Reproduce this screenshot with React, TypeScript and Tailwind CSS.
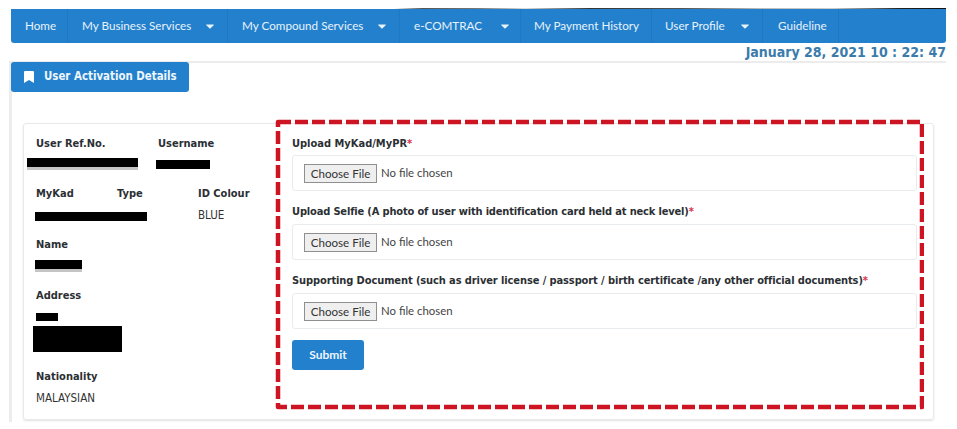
const navItems = [
  { label: 'Home', w: 'w-[57px]', pl: 'pl-[14px]', caret: '' },
  { label: 'My Business Services', w: 'w-[160px]', pl: 'pl-[14px]', caret: 'ml-[15px]' },
  { label: 'My Compound Services', w: 'w-[172px]', pl: 'pl-[14px]', caret: 'ml-[15px]' },
  { label: 'e-COMTRAC', w: 'w-[121px]', pl: 'pl-[14px]', caret: 'ml-[19px]' },
  { label: 'My Payment History', w: 'w-[131px]', pl: 'pl-[13px]', caret: '' },
  { label: 'User Profile', w: 'w-[111px]', pl: 'pl-[13px]', caret: 'ml-[16px]' },
  { label: 'Guideline', w: 'w-[76px]', pl: 'pl-[15px]', caret: '' },
]

const uploads = [
  { label: 'Upload MyKad/MyPR', mt: 'mt-0', gap: 'mt-[4px]', tracking: '' },
  { label: 'Upload Selfie (A photo of user with identification card held at neck level)', mt: 'mt-[14px]', gap: 'mt-[5px]', tracking: 'tracking-[-0.16px]' },
  { label: 'Supporting Document (such as driver license / passport / birth certificate /any other official documents)', mt: 'mt-[14px]', gap: 'mt-[5px]', tracking: 'tracking-[-0.1px]' },
]

function Caret() {
  return (
    <svg width="8" height="5" viewBox="0 0 8 5" className="shrink-0">
      <path d="M0.6 0.4h6.8c.4 0 .6.5.3.8L4.3 4.6a.4.4 0 0 1-.6 0L.3 1.2C0 .9.2.4.6.4z" fill="#e8f2fa" />
    </svg>
  )
}

function Label({ children, className = '' }: { children: React.ReactNode; className?: string }) {
  return <div className={`font-['DejaVu_Sans_Condensed',sans-serif] text-[11px] leading-[14px] font-bold text-[#2b2f33] ${className}`}>{children}</div>
}

function Redact({ className }: { className: string }) {
  return <div className={`bg-black ${className}`} />
}

function UploadRow({ label, mt, gap, tracking }: { label: string; mt: string; gap: string; tracking: string }) {
  return (
    <div className={mt}>
      <div className={`font-['DejaVu_Sans_Condensed',sans-serif] text-[11px] leading-[14px] font-bold whitespace-nowrap text-[#2b2f33] ${tracking}`}>
        {label}
        <span className="text-[#d9324a]">*</span>
      </div>
      <div className={`flex h-[36px] items-center rounded-[3px] border border-[#e9ecef] pl-[11px] ${gap}`}>
        <button className="h-[19px] w-[73px] border border-[#8f8f8f] bg-[#efefef] text-center text-[11.6px] leading-[17px] text-[#333]">Choose File</button>
        <span className="ml-[4px] text-[11.4px] text-[#444]">No file chosen</span>
      </div>
    </div>
  )
}

export default function App() {
  return (
    <div className="relative h-[429px] w-[957px] overflow-hidden bg-white font-['Lato',sans-serif]">
      <div className="ml-[11px] mt-[8px] w-[935px]">
        <div className="h-[1px] bg-[linear-gradient(90deg,#fff_0%,#fff_41%,#555_44%,#777_50%,#ddd_55%,#333_62%,#555_72%,#bbb_80%,#ccc_88%,#222_95%,#111_100%)]" />
        <nav className="flex h-[34px] items-stretch rounded-b-[3px] bg-[#2280cc] text-[11.7px] text-[#e8f2fa]">
          {navItems.map(item => (
            <div key={item.label} className={`flex shrink-0 items-center border-r border-[#1f78c0] ${item.w} ${item.pl}`}>
              <span className="whitespace-nowrap">{item.label}</span>
              {item.caret && <span className={item.caret}><Caret /></span>}
            </div>
          ))}
        </nav>
        <div className="h-[18px] text-right font-['DejaVu_Sans_Condensed',sans-serif] text-[14px] leading-[18px] font-bold whitespace-nowrap text-[#3a7bab]">
          January 28, 2021 10 : 22: 47
        </div>
      </div>

      <div className="ml-[9px] h-[361px] w-[937px] border-t-2 border-l-[3px] border-[#ececec]">
        <div className="-mt-[1px] flex h-[30px] w-[178px] -translate-x-[1px] items-center rounded-[3px] bg-[#2280cc] pl-[13px]">
          <svg width="10" height="12" viewBox="0 0 10 12">
            <path d="M0 1a1 1 0 0 1 1-1h8a1 1 0 0 1 1 1v11L5 9 0 12z" fill="#fff" />
          </svg>
          <span className="ml-[10px] font-['DejaVu_Sans_Condensed',sans-serif] text-[11.4px] font-bold whitespace-nowrap text-[#eef6fc]">User Activation Details</span>
        </div>

        <div className="ml-[11px] mt-[31px] flex h-[297px] w-[911px] rounded-[3px] border border-[#e9e9e9] shadow-[0_1px_2px_rgba(0,0,0,0.12)]">
          <div className="relative w-[268px] shrink-0 pl-[12px] pt-[13px] text-[12px] text-[#333]">
            <div className="flex">
              <Label className="w-[122px]">User Ref.No.</Label>
              <Label>Username</Label>
            </div>
            <div className="mt-[7px] flex h-[12px]">
              <Redact className="-ml-[9px] h-[12px] w-[111px] border-b-[3px] border-[#c4c4c4]" />
              <Redact className="ml-[18px] mt-[2px] h-[9px] w-[54px]" />
            </div>
            <div className="mt-[17px] flex">
              <Label className="w-[81px]">MyKad</Label>
              <Label className="w-[81px]">Type</Label>
              <Label>ID Colour</Label>
            </div>
            <div className="mt-[8px] flex h-[14px] items-center">
              <Redact className="-ml-[1px] h-[9px] w-[112px]" />
              <span className="ml-[51px] font-['DejaVu_Sans_Condensed',sans-serif] text-[11.5px]">BLUE</span>
            </div>
            <Label className="mt-[15px]">Name</Label>
            <Redact className="-ml-[1px] mt-[8px] h-[12px] w-[47px] border-b-[3px] border-[#c4c4c4]" />
            <Label className="mt-[17px]">Address</Label>
            <Redact className="mt-[10px] h-[8px] w-[22px]" />
            <Redact className="-ml-[3px] mt-[5px] h-[26px] w-[89px]" />
            <Label className="mt-[18px]">Nationality</Label>
            <div className="mt-[7px] font-['DejaVu_Sans_Condensed',sans-serif] text-[11.5px] leading-[14px]">MALAYSIAN</div>
          </div>

          <div className="w-[625px] shrink-0 pt-[13px]">
            {uploads.map(u => <UploadRow key={u.label} label={u.label} mt={u.mt} gap={u.gap} tracking={u.tracking} />)}
            <button className="mt-[11px] block h-[30px] w-[72px] rounded-[3px] bg-[#2280cc] text-[12px] font-bold text-[#eef6fc]">Submit</button>
          </div>
        </div>
      </div>

      {/* red annotation drawn over the form */}
      <svg width="650" height="292" viewBox="0 0 650 292" className="absolute left-[274px] top-[118px]">
        <rect x="4" y="4" width="644" height="285" fill="none" stroke="#cc1422" strokeWidth="4.5" strokeDasharray="13 4" strokeLinejoin="round" />
      </svg>
    </div>
  )
}
